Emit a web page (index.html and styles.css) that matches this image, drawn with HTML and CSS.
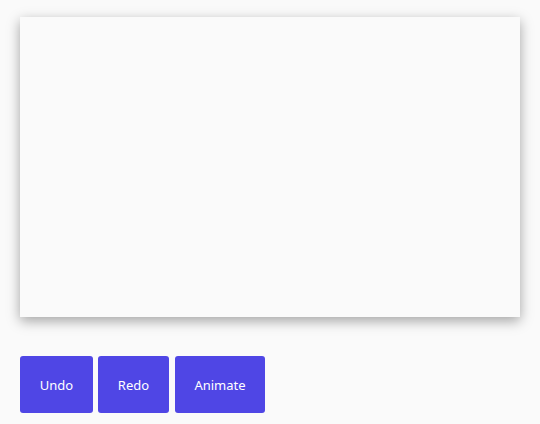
FILE: index.html
```html
<!DOCTYPE html>
<html>
<head>
<meta charset="utf-8">
<link rel="stylesheet" href="styles.css">
</head>
<body>
<div class="page">
  <div class="canvas"></div>
  <div class="toolbar">
    <button class="btn btn-undo">Undo</button>
    <button class="btn btn-redo">Redo</button>
    <button class="btn btn-animate">Animate</button>
  </div>
</div>
</body>
</html>
```
FILE: styles.css
```css
html, body {
  margin: 0;
  background: #fafafa;
}
.page {
  padding: 17px 20px;
  font-family: "Noto Sans", "Open Sans", sans-serif;
}
.canvas {
  width: 500px;
  height: 300px;
  background: #fafafa;
  box-shadow: 0 4px 12px rgba(0, 0, 0, 0.35);
}
.toolbar {
  display: flex;
  gap: 5px;
  margin-top: 39px;
}
.btn {
  height: 57px;
  border: none;
  border-radius: 3px;
  background: #4f46e5;
  color: #fff;
  font-family: inherit;
  font-size: 13px;
  padding: 0;
  cursor: pointer;
}
.btn-undo { width: 73px; }
.btn-redo { width: 71px; }
.btn-animate { width: 90px; margin-left: 1px; }
```
